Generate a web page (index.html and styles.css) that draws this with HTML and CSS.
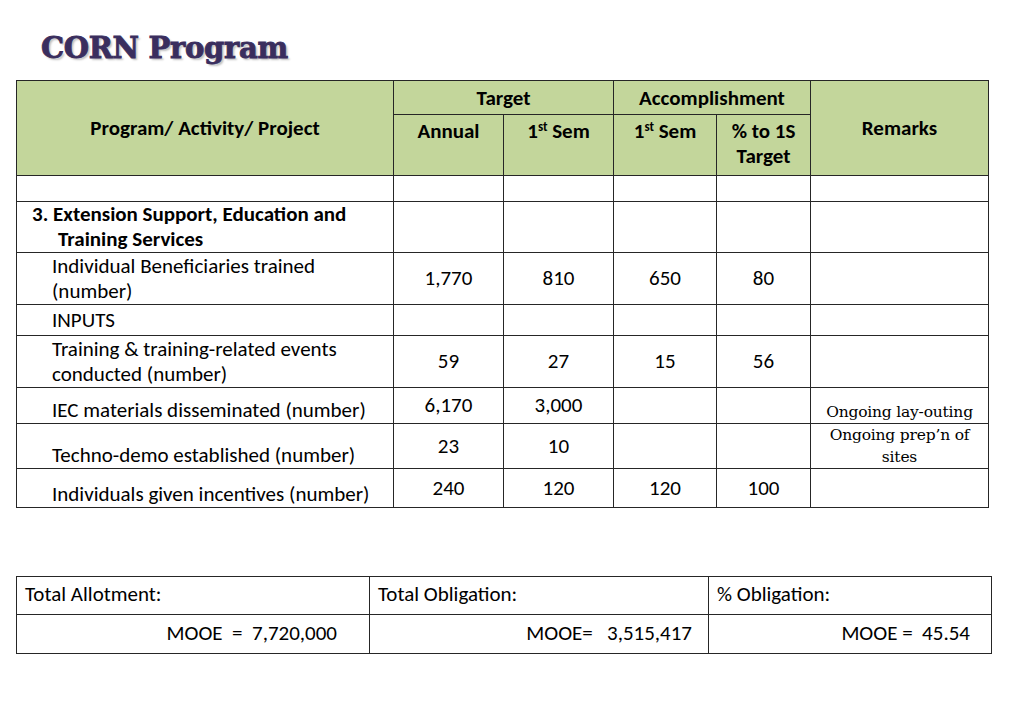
FILE: index.html
```html
<!DOCTYPE html>
<html>
<head>
<meta charset="utf-8">
<link rel="stylesheet" href="styles.css">
</head>
<body>
<div class="page">
  <h1 class="title">CORN Program</h1>
  <table class="main">
    <colgroup>
      <col style="width:377px"><col style="width:110px"><col style="width:110px"><col style="width:103px"><col style="width:94px"><col style="width:178px">
    </colgroup>
    <tr class="h1">
      <th rowspan="2" class="hdr">Program/ Activity/ Project</th>
      <th colspan="2" class="hdr top">Target</th>
      <th colspan="2" class="hdr top">Accomplishment</th>
      <th rowspan="2" class="hdr">Remarks</th>
    </tr>
    <tr class="h2">
      <th class="hdr top">Annual</th>
      <th class="hdr top">1<sup>st</sup> Sem</th>
      <th class="hdr top">1<sup>st</sup> Sem</th>
      <th class="hdr top">% to 1S Target</th>
    </tr>
    <tr class="r-empty"><td></td><td></td><td></td><td></td><td></td><td></td></tr>
    <tr class="r-sec">
      <td class="sec"><span class="sec-l1">3. Extension Support, Education and</span><span class="sec-l2">Training Services</span></td>
      <td></td><td></td><td></td><td></td><td></td>
    </tr>
    <tr class="r-2">
      <td class="lbl">Individual Beneficiaries trained (number)</td>
      <td class="num">1,770</td><td class="num">810</td><td class="num">650</td><td class="num">80</td><td></td>
    </tr>
    <tr class="r-in">
      <td class="lbl">INPUTS</td><td></td><td></td><td></td><td></td><td></td>
    </tr>
    <tr class="r-2">
      <td class="lbl">Training &amp; training-related events conducted (number)</td>
      <td class="num">59</td><td class="num">27</td><td class="num">15</td><td class="num">56</td><td></td>
    </tr>
    <tr class="r-iec">
      <td class="lbl bottom">IEC materials disseminated (number)</td>
      <td class="num up">6,170</td><td class="num up">3,000</td><td></td><td></td><td class="rem bottom">Ongoing lay-outing</td>
    </tr>
    <tr class="r-tech">
      <td class="lbl bottom">Techno-demo established (number)</td>
      <td class="num">23</td><td class="num">10</td><td></td><td></td><td class="rem">Ongoing prep’n of sites</td>
    </tr>
    <tr class="r-ind">
      <td class="lbl bottom">Individuals given incentives (number)</td>
      <td class="num">240</td><td class="num">120</td><td class="num">120</td><td class="num">100</td><td></td>
    </tr>
  </table>

  <table class="totals">
    <colgroup><col style="width:353px"><col style="width:339px"><col style="width:283px"></colgroup>
    <tr class="t1">
      <td class="tl">Total Allotment:</td>
      <td class="tl">Total Obligation:</td>
      <td class="tl">% Obligation:</td>
    </tr>
    <tr class="t2">
      <td class="tv v1">MOOE&nbsp; =&nbsp; 7,720,000</td>
      <td class="tv v2">MOOE=&nbsp;&nbsp; 3,515,417</td>
      <td class="tv v3">MOOE =&nbsp; 45.54</td>
    </tr>
  </table>
</div>
</body>
</html>
```

FILE: styles.css
```css
html, body {
  margin: 0;
  padding: 0;
  background: #ffffff;
}
body {
  font-family: Carlito, "Liberation Sans", Arial, sans-serif;
  color: #000;
}
.page {
  width: 1023px;
  height: 708px;
  position: relative;
  padding-top: 31px;
  box-sizing: border-box;
}
.title {
  margin: 0 0 0 41px;
  font-family: "DejaVu Serif", serif;
  font-weight: 900;
  font-size: 29px;
  line-height: 34px;
  letter-spacing: -0.3px;
  color: #3a2e5e;
  -webkit-text-stroke: 0.9px #3a2e5e;
  text-shadow: 2px 2px 2px rgba(0,0,0,0.25);
  height: 49px;
}
table {
  border-collapse: collapse;
  table-layout: fixed;
}
.main {
  margin-left: 16px;
  width: 972px;
}
.main th, .main td {
  border: 1px solid #262626;
  padding: 0;
  font-size: 21px;
  line-height: 25px;
}
.hdr {
  background: #c3d69b;
  font-weight: bold;
  text-align: center;
  vertical-align: middle;
}
.hdr.top { vertical-align: top; padding-top: 4px; }
.h1 th.top { padding-top: 5px; }
.h1 { height: 34px; }
.h2 { height: 61px; }
.h2 th { padding-top: 5px; }
sup { font-size: 13px; line-height: 0; vertical-align: 7px; }
.r-empty { height: 26px; }
.r-sec { height: 51px; }
.r-2 { height: 52px; }
.r-in { height: 31px; }
.r-iec { height: 36px; }
.r-tech { height: 44px; }
.r-ind { height: 39px; }
.sec {
  font-weight: bold;
  padding-left: 15px !important;
  vertical-align: top;
}
.sec-l1, .sec-l2 { display: block; }
.sec-l2 { padding-left: 26px; }
.lbl {
  padding-left: 35px !important;
  padding-right: 10px !important;
  vertical-align: middle;
}
.lbl.bottom { vertical-align: bottom; }
.num { text-align: center; vertical-align: middle; }
.num.up { vertical-align: top; padding-top: 5px !important; }
.rem {
  font-family: "DejaVu Serif", "Liberation Serif", serif;
  font-size: 15.5px !important;
  line-height: 22px !important;
  letter-spacing: -0.2px;
  text-align: center;
  vertical-align: top;
}
.rem.bottom { vertical-align: bottom; }
.totals {
  margin-top: 68px;
  margin-left: 16px;
  width: 975px;
}
.totals td {
  border: 1px solid #262626;
  font-size: 21px;
  line-height: 24px;
  padding: 0 0 3px 8px;
}
.t1 { height: 38px; }
.t2 { height: 39px; }
.tv { text-align: right; }
.v1 { padding-right: 32px !important; }
.v2 { padding-right: 16px !important; }
.v3 { padding-right: 21px !important; }
```
